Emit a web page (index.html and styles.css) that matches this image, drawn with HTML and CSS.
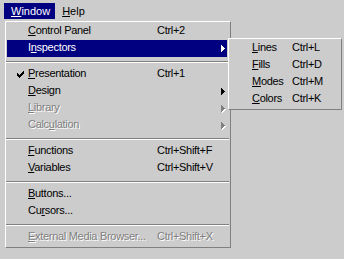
FILE: index.html
```html
<!DOCTYPE html>
<html lang="en">
  <head>
    <meta charset="UTF-8" />
    <title>Window menu</title>
    <link rel="stylesheet" href="styles.css">
  </head>
  <body>
    <!-- Menu bar -->
    <div class="menubar">
      <span class="menubar-item active"><u>W</u>indow</span>
      <span class="menubar-item"><u>H</u>elp</span>
    </div>

    <!-- Window dropdown -->
    <div class="menu main-menu">
      <div class="item">
        <span class="mark"></span>
        <span class="label"><u>C</u>ontrol Panel</span>
        <span class="key">Ctrl+2</span>
      </div>
      <div class="item selected">
        <span class="mark"></span>
        <span class="label">I<u>n</u>spectors</span>
        <svg class="arrow" width="4" height="7" viewBox="0 0 4 7"><path d="M0 0h1v7h-1zM1 1h1v5h-1zM2 2h1v3h-1zM3 3h1v1h-1z" /></svg>
      </div>
      <div class="separator"></div>
      <div class="item">
        <span class="mark">
          <svg width="7" height="7" viewBox="0 0 7 7"><path d="M6 0h1v1h-1zM5 1h2v1h-2zM0 2h1v1h-1zM4 2h3v1h-3zM0 3h2v1h-2zM3 3h3v1h-3zM0 4h5v1h-5zM1 5h3v1h-3zM2 6h1v1h-1z" /></svg>
        </span>
        <span class="label"><u>P</u>resentation</span>
        <span class="key">Ctrl+1</span>
      </div>
      <div class="item">
        <span class="mark"></span>
        <span class="label"><u>D</u>esign</span>
        <svg class="arrow" width="4" height="7" viewBox="0 0 4 7"><path d="M0 0h1v7h-1zM1 1h1v5h-1zM2 2h1v3h-1zM3 3h1v1h-1z" /></svg>
      </div>
      <div class="item disabled">
        <span class="mark"></span>
        <span class="label"><u>L</u>ibrary</span>
        <svg class="arrow" width="5" height="8" viewBox="0 0 5 8"><path class="hi" d="M1 1h1v7h-1zM2 2h1v5h-1zM3 3h1v3h-1zM4 4h1v1h-1z" /><path d="M0 0h1v7h-1zM1 1h1v5h-1zM2 2h1v3h-1zM3 3h1v1h-1z" /></svg>
      </div>
      <div class="item disabled">
        <span class="mark"></span>
        <span class="label">Calc<u>u</u>lation</span>
        <svg class="arrow" width="5" height="8" viewBox="0 0 5 8"><path class="hi" d="M1 1h1v7h-1zM2 2h1v5h-1zM3 3h1v3h-1zM4 4h1v1h-1z" /><path d="M0 0h1v7h-1zM1 1h1v5h-1zM2 2h1v3h-1zM3 3h1v1h-1z" /></svg>
      </div>
      <div class="separator"></div>
      <div class="item">
        <span class="mark"></span>
        <span class="label"><u>F</u>unctions</span>
        <span class="key">Ctrl+Shift+F</span>
      </div>
      <div class="item">
        <span class="mark"></span>
        <span class="label"><u>V</u>ariables</span>
        <span class="key">Ctrl+Shift+V</span>
      </div>
      <div class="separator"></div>
      <div class="item">
        <span class="mark"></span>
        <span class="label"><u>B</u>uttons...</span>
      </div>
      <div class="item">
        <span class="mark"></span>
        <span class="label">Cu<u>r</u>sors...</span>
      </div>
      <div class="separator"></div>
      <div class="item disabled">
        <span class="mark"></span>
        <span class="label"><u>E</u>xternal Media Browser...</span>
        <span class="key">Ctrl+Shift+X</span>
      </div>
    </div>

    <!-- Inspectors submenu -->
    <div class="menu sub-menu">
      <div class="item">
        <span class="mark"></span>
        <span class="label"><u>L</u>ines</span>
        <span class="key">Ctrl+L</span>
      </div>
      <div class="item">
        <span class="mark"></span>
        <span class="label"><u>F</u>ills</span>
        <span class="key">Ctrl+D</span>
      </div>
      <div class="item">
        <span class="mark"></span>
        <span class="label"><u>M</u>odes</span>
        <span class="key">Ctrl+M</span>
      </div>
      <div class="item">
        <span class="mark"></span>
        <span class="label"><u>C</u>olors</span>
        <span class="key">Ctrl+K</span>
      </div>
    </div>
  </body>
</html>
```

FILE: styles.css
```css
body {
  margin: 0;
  width: 344px;
  height: 259px;
  background-color: #cccccc;
  font-family: "Liberation Sans", Arial, sans-serif;
  font-size: 11px;
  letter-spacing: -0.3px;
  color: #000;
  position: relative;
  overflow: hidden;
}

u {
  text-decoration: underline;
  text-underline-offset: 1px;
}

/* Menu bar at the top */
.menubar {
  display: flex;
  padding: 3px 0 0 4px;
  height: 17px;
}

.menubar-item {
  height: 16px;
  line-height: 16px;
  padding: 0 5px 0 7px;
  letter-spacing: 0;
}

.menubar-item.active {
  background-color: #000080;
  color: #fff;
}

/* Dropdown boxes */
.menu {
  position: absolute;
  box-sizing: border-box;
  background-color: #cccccc;
  border: 1px solid;
  border-color: #ffffff #808080 #808080 #ffffff;
  display: flex;
  flex-direction: column;
}

.main-menu {
  left: 5px;
  top: 21px;
  width: 226px;
  height: 227px;
  padding: 1px 3px 1px 1px;
}

.sub-menu {
  left: 228px;
  top: 38px;
  width: 114px;
  height: 72px;
  padding: 1px 3px 1px 1px;
}

.item {
  display: flex;
  align-items: center;
  box-sizing: border-box;
  height: 17px;
  line-height: 15px;
  padding-bottom: 2px;
  white-space: nowrap;
}

.mark {
  box-sizing: border-box;
  width: 21px;
  padding: 2px 0 0 10px;
  display: flex;
}

.mark svg path {
  fill: #000;
}

.main-menu .label {
  width: 129px;
}

.sub-menu .mark {
  width: 22px;
}

.sub-menu .label {
  width: 40px;
}

.arrow {
  margin-left: auto;
  margin-right: 2px;
  margin-top: 2px;
  fill: #000;
}

.item.selected {
  background-color: #000080;
  color: #fff;
}

.item.selected .arrow {
  fill: #fff;
}

.item.disabled {
  color: #808080;
  text-shadow: 1px 1px 0 #ffffff;
}

.item.disabled .arrow {
  fill: #808080;
  margin-right: 1px;
  margin-top: 3px;
}

.item.disabled .arrow .hi {
  fill: #ffffff;
}

.separator {
  height: 9px;
  box-sizing: border-box;
  padding-top: 4px;
  margin-left: -1px;
  margin-right: -2px;
}

.separator::before {
  content: "";
  display: block;
  border-top: 1px solid #808080;
  border-bottom: 1px solid #ffffff;
}
```
